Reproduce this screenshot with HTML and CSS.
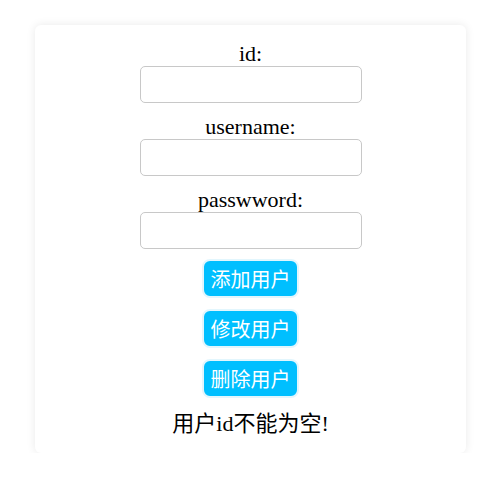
FILE: index.html
```html
<!DOCTYPE html>
<html>
<head>
<meta charset="utf-8">
<link rel="stylesheet" href="styles.css">
</head>
<body>
<div class="card">
  <div class="field">
    <label class="label">id:</label>
    <input class="input" type="text">
  </div>
  <div class="field">
    <label class="label">username:</label>
    <input class="input" type="text">
  </div>
  <div class="field">
    <label class="label">passwword:</label>
    <input class="input" type="text">
  </div>
  <div class="actions">
    <button class="btn">添加用户</button>
    <button class="btn">修改用户</button>
    <button class="btn">删除用户</button>
  </div>
  <div class="msg">用户id不能为空!</div>
</div>
</body>
</html>
```
FILE: styles.css
```css
html, body {
  margin: 0;
  padding: 0;
  background: #fff;
}
body {
  font-family: "Liberation Serif", "Noto Sans CJK SC", serif;
  padding: 25px 0 0 35px;
}
.card {
  width: 431px;
  height: 428px;
  box-sizing: border-box;
  padding: 16px 0 16px;
  border-radius: 6px;
  background: #fff;
  box-shadow: 0 0 10px rgba(0, 0, 0, 0.09);
  display: flex;
  flex-direction: column;
  align-items: center;
}
.field {
  display: flex;
  flex-direction: column;
  align-items: center;
  margin-bottom: 11px;
}
.label {
  display: block;
  font-size: 22px;
  line-height: 25px;
  color: #000;
}
.input {
  width: 222px;
  height: 37px;
  box-sizing: border-box;
  border: 1px solid #c8c8c8;
  border-radius: 5px;
  margin: 0;
  padding: 0 8px;
  outline: none;
}
.actions {
  display: flex;
  flex-direction: column;
  align-items: center;
  gap: 11px;
  margin-top: -1px;
}
.btn {
  width: 97px;
  height: 39px;
  box-sizing: border-box;
  padding: 0;
  border: 2px solid #e2f6fd;
  border-radius: 8px;
  background: #00bfff;
  color: #fff;
  font-family: "Noto Sans CJK SC", sans-serif;
  font-size: 20px;
  line-height: 33px;
  margin: 0;
}
.msg {
  margin-top: 13px;
  font-size: 22px;
  line-height: 26px;
  color: #000;
}
```
